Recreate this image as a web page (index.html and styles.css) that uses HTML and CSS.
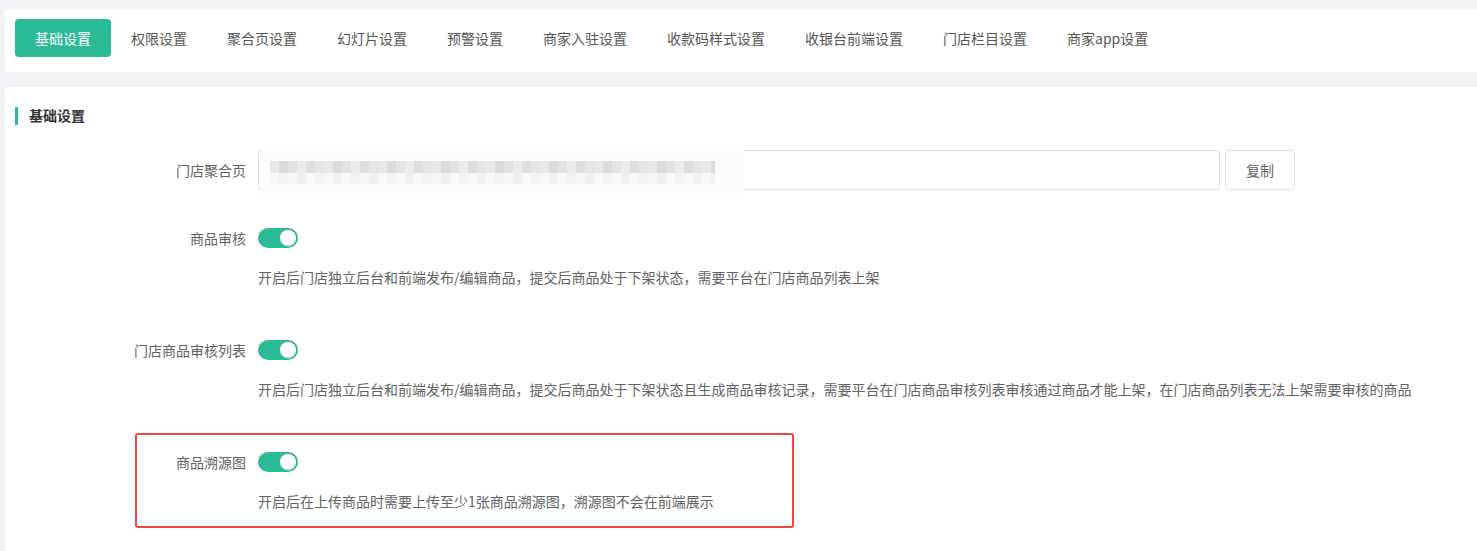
FILE: index.html
```html
<!DOCTYPE html>
<html lang="zh-CN">
<head>
    <meta charset="UTF-8">
    <meta name="viewport" content="width=device-width, initial-scale=1.0">
    <title>基础设置</title>
    <link rel="stylesheet" href="styles.css">
</head>
<body>
    <div class="page">
        <div class="card tabs-card">
            <div class="tabs">
                <span class="tab active">基础设置</span>
                <span class="tab">权限设置</span>
                <span class="tab">聚合页设置</span>
                <span class="tab">幻灯片设置</span>
                <span class="tab">预警设置</span>
                <span class="tab">商家入驻设置</span>
                <span class="tab">收款码样式设置</span>
                <span class="tab">收银台前端设置</span>
                <span class="tab">门店栏目设置</span>
                <span class="tab">商家app设置</span>
            </div>
        </div>

        <div class="card main-card">
            <h3 class="section-title">基础设置</h3>

            <div class="form">
                <div class="form-item item-link">
                    <label class="form-label">门店聚合页</label>
                    <div class="form-content">
                        <div class="link-row">
                            <div class="input-box">
                                <!-- 链接已打码 -->
                                <div class="mosaic">
                                    <div class="mosaic-top"></div>
                                    <div class="mosaic-bottom"></div>
                                </div>
                            </div>
                            <button class="btn-copy" type="button">复制</button>
                        </div>
                    </div>
                </div>

                <div class="form-item">
                    <label class="form-label">商品审核</label>
                    <div class="form-content">
                        <div class="switch-line"><span class="switch on"></span></div>
                        <p class="desc">开启后门店独立后台和前端发布/编辑商品，提交后商品处于下架状态，需要平台在门店商品列表上架</p>
                    </div>
                </div>

                <div class="form-item">
                    <label class="form-label">门店商品审核列表</label>
                    <div class="form-content">
                        <div class="switch-line"><span class="switch on"></span></div>
                        <p class="desc">开启后门店独立后台和前端发布/编辑商品，提交后商品处于下架状态且生成商品审核记录，需要平台在门店商品审核列表审核通过商品才能上架，在门店商品列表无法上架需要审核的商品</p>
                    </div>
                </div>

                <div class="form-item marked">
                    <label class="form-label">商品溯源图</label>
                    <div class="form-content">
                        <div class="switch-line"><span class="switch on"></span></div>
                        <p class="desc">开启后在上传商品时需要上传至少1张商品溯源图，溯源图不会在前端展示</p>
                    </div>
                </div>
            </div>
        </div>
    </div>
</body>
</html>
```

FILE: styles.css
```css
html, body {
    margin: 0;
    padding: 0;
    background-color: #f0f2f5;
    font-family: "Microsoft YaHei", "Noto Sans CJK SC", "Noto Sans", sans-serif;
    font-size: 14px;
    color: #606266;
}
.page {
    padding: 9px 0 0 5px;
    height: 542px;
    overflow: hidden;
}
.card {
    background-color: #fff;
    border-radius: 4px 0 0 4px;
}
.tabs-card {
    padding: 10px 10px 15px;
}
.tabs {
    display: flex;
}
.tab {
    height: 38px;
    line-height: 38px;
    padding: 0 20px;
    color: #555;
    border-radius: 4px;
    white-space: nowrap;
}
.tab.active {
    background-color: #2bbb97;
    color: #fff;
}
.main-card {
    margin-top: 15px;
    padding: 20px 10px 40px;
}
.section-title {
    margin: 0 0 25px;
    height: 18px;
    line-height: 17px;
    padding-left: 11px;
    border-left: 3px solid #2bbb97;
    font-size: 14px;
    font-weight: bold;
    color: #333;
}
.form-item {
    display: flex;
    margin-bottom: 42px;
}
.item-link {
    margin-bottom: 28px;
}
.form-label {
    width: 243px;
    flex-shrink: 0;
    box-sizing: border-box;
    padding-right: 12px;
    text-align: right;
    line-height: 40px;
    color: #606266;
}
.form-content {
    flex: 1;
}
.link-row {
    display: flex;
    gap: 5px;
}
.input-box {
    position: relative;
    width: 962px;
    height: 40px;
    box-sizing: border-box;
    border: 1px solid #dcdfe6;
    border-radius: 4px;
}
.mosaic {
    position: absolute;
    left: 4px;
    top: -1px;
    width: 480px;
    height: 47px;
    background-color: #fcfcfc;
}
.mosaic-top {
    margin: 11px 0 0 7px;
    width: 445px;
    height: 12px;
    background: repeating-linear-gradient(90deg, #e8e8e8 0 9px, #dadada 9px 18px, #e2e2e2 18px 27px, #ececec 27px 36px, #dddddd 36px 45px, #e5e5e5 45px 54px);
}
.mosaic-bottom {
    margin-left: 7px;
    width: 445px;
    height: 11px;
    background: repeating-linear-gradient(90deg, #f8f8f8 0 9px, #f2f2f2 9px 18px, #f6f6f6 18px 27px, #f0f0f0 27px 36px);
}
.btn-copy {
    width: 70px;
    height: 40px;
    border: 1px solid #dcdfe6;
    border-radius: 4px;
    background-color: #fff;
    color: #606266;
    font-family: inherit;
    font-size: 14px;
    padding: 0;
}
.switch-line {
    height: 40px;
    display: flex;
    align-items: center;
}
.switch {
    position: relative;
    width: 40px;
    height: 20px;
    border-radius: 10px;
    background-color: #dcdfe6;
}
.switch.on {
    background-color: #2bbb97;
}
.switch::after {
    content: "";
    position: absolute;
    top: 2px;
    left: 2px;
    width: 16px;
    height: 16px;
    border-radius: 50%;
    background-color: #fff;
}
.switch.on::after {
    left: 22px;
}
.desc {
    margin: 8px 0 0;
    line-height: 22px;
    color: #606266;
    white-space: nowrap;
}
.marked {
    position: relative;
}
.marked::after {
    content: "";
    position: absolute;
    left: 120px;
    top: -9px;
    width: 659px;
    height: 95px;
    box-sizing: border-box;
    border: 2px solid #eb4a3c;
    border-radius: 3px;
}
```
